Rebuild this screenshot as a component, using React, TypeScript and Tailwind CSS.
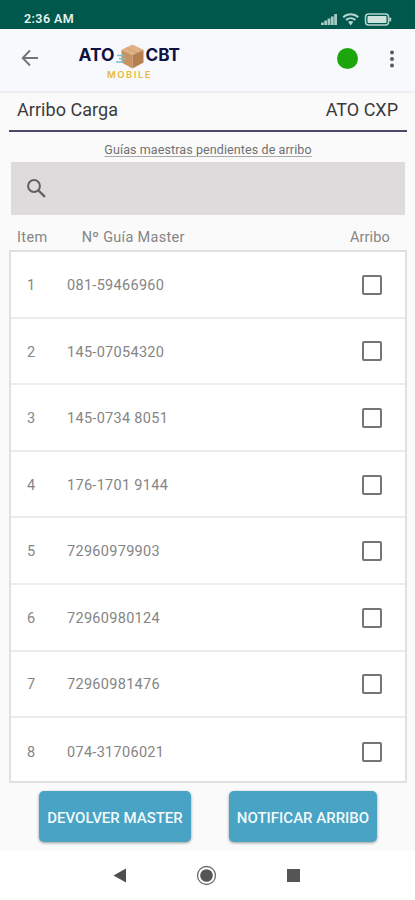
import { useState } from 'react';

const guides = [
  '081-59466960',
  '145-07054320',
  '145-0734 8051',
  '176-1701 9144',
  '72960979903',
  '72960980124',
  '72960981476',
  '074-31706021',
];

function StatusBar() {
  return (
    <div className="h-[29px] shrink-0 bg-[#00574b] flex items-end justify-between pl-6 pr-[23px] pb-[3px]">
      <span className="text-[12.5px] leading-[15px] font-semibold tracking-[0.4px] text-[#e6f1ee]">2:36 AM</span>
      <svg width="72" height="14" viewBox="0 0 72 14" fill="none">
        <g fill="#a9cac3">
          <rect x="1" y="10.5" width="2.8" height="2.5" />
          <rect x="4.3" y="8.5" width="2.8" height="4.5" />
          <rect x="7.6" y="6.5" width="2.8" height="6.5" />
          <rect x="10.9" y="4.5" width="2.8" height="8.5" />
          <rect x="14.2" y="2" width="2.8" height="11" />
        </g>
        <g stroke="#b5d3cc" strokeWidth="2">
          <path d="M23.2 5.2c4.2-3.8 10.8-3.8 15 0" />
          <path d="M26 8c2.7-2.4 6.7-2.4 9.4 0" />
        </g>
        <path d="M28 9.8c1.5-1.2 3.9-1.2 5.4 0l-2.7 3.7z" fill="#b5d3cc" />
        <rect x="45.5" y="2" width="23" height="11" rx="3" stroke="#b5d3cc" strokeWidth="1.5" />
        <rect x="47.5" y="4" width="19" height="7" rx="1" fill="#cfe3de" />
        <rect x="69.2" y="5.5" width="2" height="4" rx="0.8" fill="#b5d3cc" />
      </svg>
    </div>
  );
}

function Logo() {
  return (
    <svg width="104" height="40" viewBox="0 0 104 40">
      <g fontFamily="Inter, sans-serif" fontWeight="700" fontSize="17" fill="#0f1344">
        <text x="0.5" y="20" textLength="36" lengthAdjust="spacingAndGlyphs">ATO</text>
        <text x="67.5" y="20" textLength="34.5" lengthAdjust="spacingAndGlyphs">CBT</text>
      </g>
      <path d="M54.5 3.500 65.500 8.700 54.500 14 43.500 8.700z" fill="#dfb184" />
      <path d="M43.500 8.700 54.500 14V27.500L43.500 21.500z" fill="#c8935f" />
      <path d="M65.500 8.700 54.500 14V27.500L65.500 21.500z" fill="#b57f50" />
      <path d="M48 6.600 59 11.800" stroke="#cfa276" strokeWidth="1" />
      <path d="M39 14.500h7.500M41 17.700h7M38 21h8.500" stroke="#79bccb" strokeWidth="1.500" />
      <text
        x="29"
        y="37"
        textLength="43.500"
        fontFamily="Inter, sans-serif"
        fontWeight="600"
        fontSize="9.5"
        fill="#e9b937"
      >
        MOBILE
      </text>
    </svg>
  );
}

function AppBar() {
  return (
    <header className="h-16 shrink-0 bg-[#f8f9fd] border-b-2 border-[#eeeff1] flex items-center pb-[3px]">
      <svg width="18" height="18" viewBox="0 0 18 18" fill="none" stroke="#737478" strokeWidth="1.9" className="ml-[21px] -mt-px">
        <path d="M17 9H2M9 1.5 1.7 9 9 16.5" />
      </svg>
      <div className="ml-[39px] mt-[5px]">
        <Logo />
      </div>
      <span className="ml-auto w-[21px] h-[21px] rounded-full bg-[#1ca60b]" />
      <svg width="6" height="18" viewBox="0 0 6 18" fill="#5c5c60" className="ml-[31px] mr-5">
        <circle cx="3" cy="2.5" r="2" />
        <circle cx="3" cy="9" r="2" />
        <circle cx="3" cy="15.5" r="2" />
      </svg>
    </header>
  );
}

interface RowProps {
  item: number;
  guide: string;
  checked: boolean;
  onToggle: () => void;
}

function GuideRow({ item, guide, checked, onToggle }: RowProps) {
  return (
    <li className="h-[66.6px] shrink-0 flex items-center border-b-2 border-[#ececec] last:border-b-0 text-[14.5px] text-[#858585]">
      <span className="w-10 text-center pt-[3px]">{item}</span>
      <span className="ml-4 pt-[3px] tracking-[0.3px]">{guide}</span>
      <button
        onClick={onToggle}
        aria-pressed={checked}
        className="ml-auto mr-[23px] mt-px w-[20px] h-[20px] rounded-[2px] border-2 border-[#757575] flex items-center justify-center"
      >
        {checked && <span className="w-[11px] h-[11px] bg-[#48a3c4]" />}
      </button>
    </li>
  );
}

export default function App() {
  const [selected, setSelected] = useState<number[]>([]);

  const toggle = (index: number) => {
    setSelected((prev) => (prev.includes(index) ? prev.filter((i) => i !== index) : [...prev, index]));
  };

  return (
    <div className="w-[415px] h-[900px] flex flex-col bg-[#fafafa] font-[Roboto,sans-serif] overflow-hidden">
      <StatusBar />
      <AppBar />

      <main className="flex-1 flex flex-col pl-[9px] pr-2">
        <div className="h-[39px] flex justify-between items-start border-b-2 border-[#4b4a69] pt-[5px] pl-2 pr-[9px] text-[18px] leading-6 text-[#3a3a3a]">
          <h1 className="tracking-[0.05px]">Arribo Carga</h1>
          <span>ATO CXP</span>
        </div>

        <p className="h-[30px] pt-[9px] text-center text-[12.5px] leading-[18px] text-[#707070] underline decoration-[#aaa] underline-offset-2 tracking-[0.1px]">
          Guías maestras pendientes de arribo
        </p>

        <div className="h-[53px] ml-0.5 mr-0.5 pl-4 flex items-center bg-[#dedbdc]">
          <svg width="19" height="19" viewBox="0 0 19 19" fill="none" stroke="#616061">
            <circle cx="7" cy="7" r="5.9" strokeWidth="2" />
            <path d="m11.3 11.3 6.6 6.6" strokeWidth="2.3" />
          </svg>
        </div>

        <div className="h-[35px] flex items-center pt-[10px] pl-2 pr-[17px] text-[14.5px] text-[#858585]">
          <span className="tracking-[0.4px]">Item</span>
          <span className="ml-[34px] tracking-[0.3px]">Nº Guía Master</span>
          <span className="ml-auto tracking-[0.15px]">Arribo</span>
        </div>

        <ul className="h-[533px] flex flex-col overflow-hidden bg-white border-2 border-[#e0e0e0]">
          {guides.map((guide, i) => (
            <GuideRow key={guide} item={i + 1} guide={guide} checked={selected.includes(i)} onToggle={() => toggle(i)} />
          ))}
        </ul>

        <div className="flex pt-2 pl-[30px] gap-[38px] text-[15px] font-medium text-[#f3fafc]">
          <button className="w-[152px] h-[51px] pt-[3px] rounded-[5px] bg-[#48a3c4] shadow-[0_1px_3px_rgba(0,0,0,0.4)] whitespace-nowrap">
            DEVOLVER MASTER
          </button>
          <button className="w-[148px] h-[51px] pt-[3px] rounded-[5px] bg-[#48a3c4] shadow-[0_1px_3px_rgba(0,0,0,0.4)] whitespace-nowrap">
            NOTIFICAR ARRIBO
          </button>
        </div>
      </main>

      <nav className="h-[49px] shrink-0 bg-white flex items-center pl-[113px] gap-[70px]">
        <svg width="13" height="15" viewBox="0 0 13 15" fill="#4e4e4e">
          <path d="M13 0.5v14L0.5 7.5z" />
        </svg>
        <svg width="21" height="21" viewBox="0 0 21 21">
          <circle cx="10.5" cy="10.5" r="9" fill="none" stroke="#6a6a6a" strokeWidth="1.3" />
          <circle cx="10.5" cy="10.5" r="6.3" fill="#555" />
        </svg>
        <span className="w-[13px] h-[13px] bg-[#555]" />
      </nav>
    </div>
  );
}
